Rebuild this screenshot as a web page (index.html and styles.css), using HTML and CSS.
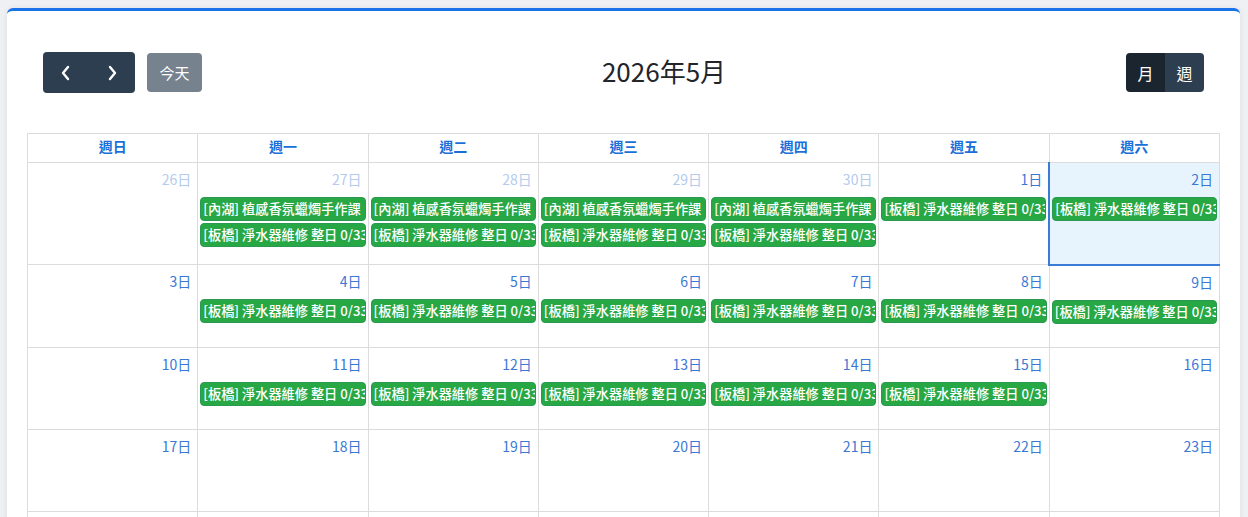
FILE: index.html
```html
<!DOCTYPE html>
<html lang="zh-Hant">
<head>
  <meta charset="UTF-8">
  <meta name="viewport" content="width=device-width, initial-scale=1.0">
  <title>課程行事曆</title>
  <link rel="stylesheet" href="styles.css">
</head>
<body>
  <div class="card">
    <div class="toolbar">
      <div class="toolbar-left">
        <div class="btn-group">
          <button class="btn btn-dark btn-arrow" aria-label="prev">
            <svg width="12" height="16" viewBox="0 0 12 16"><polyline points="8,2 3,8 8,14" fill="none" stroke="#fff" stroke-width="2.4" stroke-linecap="round" stroke-linejoin="round"/></svg>
          </button>
          <button class="btn btn-dark btn-arrow" aria-label="next">
            <svg width="12" height="16" viewBox="0 0 12 16"><polyline points="4,2 9,8 4,14" fill="none" stroke="#fff" stroke-width="2.4" stroke-linecap="round" stroke-linejoin="round"/></svg>
          </button>
        </div>
        <button class="btn btn-today">今天</button>
      </div>
      <h2 class="title">2026年5月</h2>
      <div class="btn-group">
        <button class="btn btn-dark btn-view active">月</button>
        <button class="btn btn-dark btn-view">週</button>
      </div>
    </div>

    <table class="calendar">
      <thead>
        <tr>
          <th>週日</th><th>週一</th><th>週二</th><th>週三</th><th>週四</th><th>週五</th><th>週六</th>
        </tr>
      </thead>
      <tbody>
        <tr>
          <td class="other"><div class="cell"><div class="day-num">26日</div></div></td>
          <td class="other"><div class="cell"><div class="day-num">27日</div>
            <div class="event">[內湖] 植感香氛蠟燭手作課</div>
            <div class="event">[板橋] 淨水器維修 整日 0/33</div></div></td>
          <td class="other"><div class="cell"><div class="day-num">28日</div>
            <div class="event">[內湖] 植感香氛蠟燭手作課</div>
            <div class="event">[板橋] 淨水器維修 整日 0/33</div></div></td>
          <td class="other"><div class="cell"><div class="day-num">29日</div>
            <div class="event">[內湖] 植感香氛蠟燭手作課</div>
            <div class="event">[板橋] 淨水器維修 整日 0/33</div></div></td>
          <td class="other"><div class="cell"><div class="day-num">30日</div>
            <div class="event">[內湖] 植感香氛蠟燭手作課</div>
            <div class="event">[板橋] 淨水器維修 整日 0/33</div></div></td>
          <td><div class="cell"><div class="day-num">1日</div>
            <div class="event">[板橋] 淨水器維修 整日 0/33</div></div></td>
          <td class="today"><div class="cell"><div class="day-num">2日</div>
            <div class="event">[板橋] 淨水器維修 整日 0/33</div></div></td>
        </tr>
        <tr>
          <td><div class="cell"><div class="day-num">3日</div></div></td>
          <td><div class="cell"><div class="day-num">4日</div><div class="event">[板橋] 淨水器維修 整日 0/33</div></div></td>
          <td><div class="cell"><div class="day-num">5日</div><div class="event">[板橋] 淨水器維修 整日 0/33</div></div></td>
          <td><div class="cell"><div class="day-num">6日</div><div class="event">[板橋] 淨水器維修 整日 0/33</div></div></td>
          <td><div class="cell"><div class="day-num">7日</div><div class="event">[板橋] 淨水器維修 整日 0/33</div></div></td>
          <td><div class="cell"><div class="day-num">8日</div><div class="event">[板橋] 淨水器維修 整日 0/33</div></div></td>
          <td><div class="cell"><div class="day-num">9日</div><div class="event">[板橋] 淨水器維修 整日 0/33</div></div></td>
        </tr>
        <tr>
          <td><div class="cell"><div class="day-num">10日</div></div></td>
          <td><div class="cell"><div class="day-num">11日</div><div class="event">[板橋] 淨水器維修 整日 0/33</div></div></td>
          <td><div class="cell"><div class="day-num">12日</div><div class="event">[板橋] 淨水器維修 整日 0/33</div></div></td>
          <td><div class="cell"><div class="day-num">13日</div><div class="event">[板橋] 淨水器維修 整日 0/33</div></div></td>
          <td><div class="cell"><div class="day-num">14日</div><div class="event">[板橋] 淨水器維修 整日 0/33</div></div></td>
          <td><div class="cell"><div class="day-num">15日</div><div class="event">[板橋] 淨水器維修 整日 0/33</div></div></td>
          <td><div class="cell"><div class="day-num">16日</div></div></td>
        </tr>
        <tr>
          <td><div class="cell"><div class="day-num">17日</div></div></td>
          <td><div class="cell"><div class="day-num">18日</div></div></td>
          <td><div class="cell"><div class="day-num">19日</div></div></td>
          <td><div class="cell"><div class="day-num">20日</div></div></td>
          <td><div class="cell"><div class="day-num">21日</div></div></td>
          <td><div class="cell"><div class="day-num">22日</div></div></td>
          <td><div class="cell"><div class="day-num">23日</div></div></td>
        </tr>
        <tr>
          <td><div class="cell"></div></td>
          <td><div class="cell"></div></td>
          <td><div class="cell"></div></td>
          <td><div class="cell"></div></td>
          <td><div class="cell"></div></td>
          <td><div class="cell"></div></td>
          <td><div class="cell"></div></td>
        </tr>
      </tbody>
    </table>
  </div>
</body>
</html>
```

FILE: styles.css
```css
html, body {
  height: 100%;
}

body {
  font-family: "Noto Sans CJK TC", "Noto Sans", sans-serif;
  margin: 0;
  padding: 8px 8px 8px 7px;
  box-sizing: border-box;
  background-color: #eef0f4;
  color: #212529;
  overflow: hidden;
}

.card {
  background-color: #fff;
  border-top: 3px solid #1a73e8;
  border-radius: 6px;
  padding: 20px;
  box-shadow: 0 1px 6px rgba(0, 0, 0, 0.08);
}

.toolbar {
  display: flex;
  justify-content: space-between;
  align-items: center;
  padding: 21px 16px 0 16px;
  margin-bottom: 40px;
}

.toolbar-left {
  display: flex;
  align-items: center;
  gap: 12px;
}

.title {
  margin: 0;
  padding-bottom: 4px;
  font-size: 26px;
  font-weight: 400;
  line-height: 1;
  color: #212529;
}

.btn-group {
  display: flex;
}

.btn {
  font-family: inherit;
  font-size: 16px;
  color: #fff;
  border: none;
  border-radius: 4px;
  cursor: pointer;
  padding: 0;
  line-height: 1;
}

.btn-dark {
  background-color: #2c3e50;
}

.btn-group .btn {
  border-radius: 0;
}

.btn-group .btn:first-child {
  border-top-left-radius: 4px;
  border-bottom-left-radius: 4px;
}

.btn-group .btn:last-child {
  border-top-right-radius: 4px;
  border-bottom-right-radius: 4px;
}

.btn-arrow {
  width: 46px;
  height: 41px;
  display: flex;
  align-items: center;
  justify-content: center;
}

.btn-today {
  background-color: #76828d;
  width: 55px;
  height: 39px;
  font-size: 15px;
}

.btn-view {
  width: 39px;
  height: 39px;
}

.btn-view.active {
  background-color: #1a252f;
}

.calendar {
  width: 100%;
  border-collapse: collapse;
  table-layout: fixed;
}

.calendar th,
.calendar td {
  border: 1px solid #dcdcdc;
  padding: 0;
}

.calendar th {
  height: 24px;
  padding-bottom: 4px;
  font-size: 14px;
  font-weight: 700;
  color: #1a6fd8;
}

.calendar td {
  vertical-align: top;
}

.cell {
  min-height: 81px;
  padding-bottom: 15px;
  box-sizing: border-box;
}

.day-num {
  text-align: right;
  font-size: 14px;
  line-height: 20px;
  color: #3a78d4;
  padding: 6px 6px 8px 4px;
}

.other .day-num {
  color: #b3cbee;
}

.event {
  margin: 0 2px 2px 2px;
  padding: 0 1px 0 2px;
  height: 22px;
  line-height: 22px;
  background-color: #28a745;
  border: 1px solid #2a9a52;
  border-radius: 4px;
  color: #fff;
  font-size: 13.2px;
  font-weight: 500;
  white-space: nowrap;
  overflow: hidden;
}

.calendar td.today {
  background-color: #e8f4fd;
  border-left: 2px solid #3a7bd5;
  border-bottom: 2px solid #3a7bd5;
}
```
